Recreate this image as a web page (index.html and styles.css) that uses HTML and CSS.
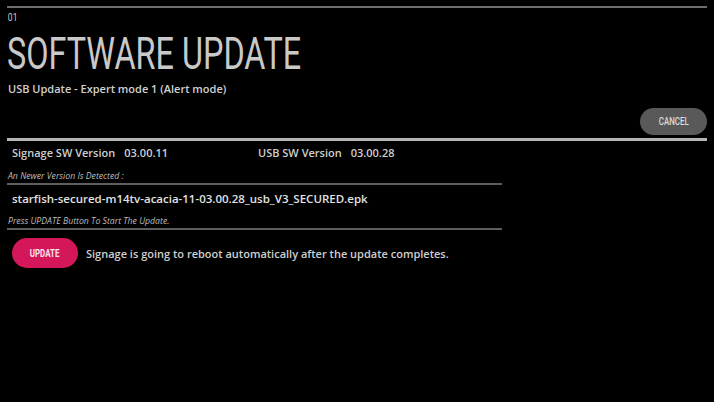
FILE: index.html
```html
<!DOCTYPE html>
<html lang="en">
<head>
  <meta charset="UTF-8">
  <meta name="viewport" content="width=device-width, initial-scale=1.0">
  <title>Software Update</title>
  <link rel="stylesheet" href="styles.css">
</head>
<body>
  <div class="screen">
    <header class="head">
      <p class="step">01</p>
      <h1 class="title"><span>SOFTWARE UPDATE</span></h1>
      <p class="subtitle">USB Update - Expert mode 1 (Alert mode)</p>
    </header>

    <div class="toolbar">
      <button class="btn btn-cancel"><span>CANCEL</span></button>
    </div>

    <div class="versions">
      <div class="version version-current">
        <span class="label">Signage SW Version</span>
        <span class="value">03.00.11</span>
      </div>
      <div class="version">
        <span class="label">USB SW Version</span>
        <span class="value">03.00.28</span>
      </div>
    </div>

    <div class="section">
      <p class="hint">An Newer Version Is Detected :</p>
      <p class="file">starfish-secured-m14tv-acacia-11-03.00.28_usb_V3_SECURED.epk</p>
      <p class="hint">Press UPDATE Button To Start The Update.</p>
    </div>

    <div class="action">
      <button class="btn btn-update"><span>UPDATE</span></button>
      <p class="notice">Signage is going to reboot automatically after the update completes.</p>
    </div>
  </div>
</body>
</html>
```

FILE: styles.css
```css
/* Reset and basic styling */
* {
  margin: 0;
  padding: 0;
  box-sizing: border-box;
}

body {
  background: #000;
  color: #d6d6d6;
  font-family: "Open Sans", "DejaVu Sans", sans-serif;
  width: 714px;
  height: 402px;
  overflow: hidden;
}

.screen {
  padding: 6px 7px 0 7px;
}

/* Header */
.head {
  border-top: 2px solid #6e6e6e;
}

.step {
  font-family: Roboto, sans-serif;
  font-size: 10px;
  line-height: 14px;
  color: #c8c8c8;
  padding: 3px 0 0 1px;
  margin-bottom: -1px;
  transform: scaleX(0.85);
  transform-origin: left center;
}

.title {
  font-family: Roboto, sans-serif;
  font-weight: 400;
  font-size: 45px;
  line-height: 45px;
  color: #c9c9c9;
  margin-top: 7px;
  white-space: nowrap;
}

.title span {
  display: inline-block;
  transform: scaleX(0.72);
  transform-origin: left center;
}

.subtitle {
  font-size: 11px;
  font-weight: 600;
  line-height: 14px;
  color: #d0d0d0;
  margin-top: 6px;
  padding-left: 1px;
}

/* Buttons */
.btn {
  border: none;
  border-radius: 15px;
  font-family: Roboto, sans-serif;
  font-weight: 500;
  font-size: 11px;
  cursor: pointer;
}

.btn span {
  display: inline-block;
  transform: scaleX(0.72);
}

.toolbar {
  display: flex;
  justify-content: flex-end;
  margin-top: 12px;
  padding-bottom: 3px;
  border-bottom: 3px solid #b4b4b4;
}

.btn-cancel {
  width: 67px;
  height: 27px;
  border-radius: 14px;
  background: #595959;
  color: #dcdcdc;
}

/* Versions */
.versions {
  display: flex;
  height: 26px;
  align-items: center;
  padding: 0 0 3px 5px;
  font-size: 11px;
  font-weight: 600;
  color: #cfcfcf;
}

.version {
  display: flex;
  gap: 9px;
}

.version-current {
  width: 246px;
}

/* Detected file */
.section {
  width: 495px;
}

.hint {
  font-size: 8.7px;
  font-style: italic;
  line-height: 13px;
  color: #bdbdbd;
  padding: 3px 0 0 1px;
  border-bottom: 2px solid #5e5e5e;
}

.file {
  font-size: 11.5px;
  font-weight: 600;
  color: #e2e2e2;
  line-height: 27px;
  padding-left: 5px;
}

/* Update action */
.action {
  display: flex;
  align-items: center;
  gap: 8px;
  margin-top: 8px;
  padding-left: 5px;
}

.btn-update {
  width: 66px;
  height: 30px;
  background: #d3175a;
  color: #fbe3ec;
  font-weight: 700;
}

.notice {
  font-size: 11px;
  font-weight: 600;
  color: #cfcfcf;
}
```
